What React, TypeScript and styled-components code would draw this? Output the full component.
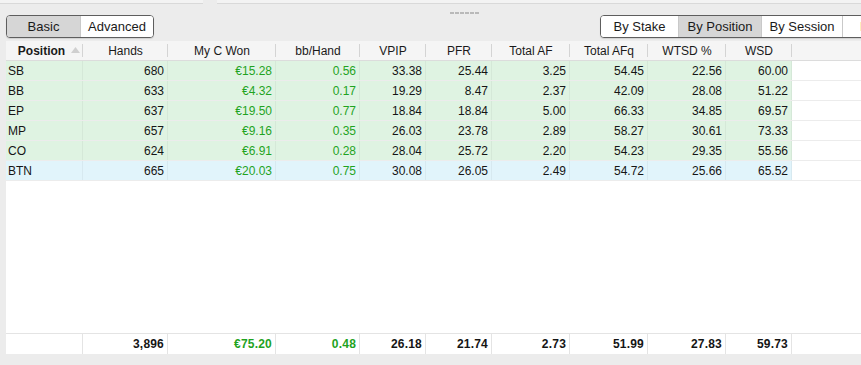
import React from "react";
import styled, { createGlobalStyle } from "styled-components";

const GlobalStyle = createGlobalStyle`
  html, body {
    margin: 0;
    padding: 0;
    background: #ececec;
  }
  body {
    font-family: "Liberation Sans", Arial, sans-serif;
    color: #1c1c1c;
  }
`;

const COLS = "77px 85px 108px 84px 66px 66px 78px 78px 78px 66px 1fr";

const Page = styled.div`
  width: 861px;
  height: 365px;
  display: flex;
  flex-direction: column;
  overflow: hidden;
  background: #ececec;
`;

const TopStrip = styled.div`
  height: 4px;
  display: flex;
  gap: 14px;
  flex-shrink: 0;
`;

const StripPiece = styled.div<{ $w?: number }>`
  ${({ $w }) => ($w ? `width: ${$w}px;` : "flex: 1;")}
  height: 3px;
  background: #f3f3f3;
  border-bottom: 1px solid #d9d9d9;
`;

const Toolbar = styled.div`
  position: relative;
  height: 37px;
  flex-shrink: 0;
  display: flex;
  align-items: flex-start;
  padding: 11px 0 0 6px;
  box-sizing: border-box;
  overflow: hidden;
`;

const Grip = styled.div`
  position: absolute;
  left: 450px;
  top: 8px;
  width: 30px;
  height: 2px;
  background: repeating-linear-gradient(
    to right,
    #b9b9b9 0 4px,
    transparent 4px 5px
  );
`;

const Segmented = styled.div<{ $offset?: number }>`
  display: flex;
  flex-shrink: 0;
  height: 23px;
  box-sizing: border-box;
  border: 1px solid #5e5e5e;
  border-radius: 4px;
  overflow: hidden;
  background: #ffffff;
  box-shadow: 0 1px 1px rgba(0, 0, 0, 0.12);
  margin-left: ${({ $offset }) => $offset ?? 0}px;
`;

const Segment = styled.div<{ $w: number; $active?: boolean; $tint?: string }>`
  width: ${({ $w }) => $w}px;
  flex-shrink: 0;
  display: flex;
  align-items: center;
  justify-content: center;
  font-size: 13px;
  color: ${({ $tint }) => $tint ?? "#1a1a1a"};
  background: ${({ $active }) => ($active ? "#d6d6d6" : "#ffffff")};
  border-right: 1px solid #c9c9c9;
  box-sizing: border-box;
  &:last-child {
    border-right: none;
  }
`;

const TablePanel = styled.div`
  flex: 1;
  margin-left: 6px;
  margin-bottom: 11px;
  background: #ffffff;
  display: flex;
  flex-direction: column;
  overflow: hidden;
`;

const HeaderRow = styled.div`
  display: grid;
  grid-template-columns: ${COLS};
  height: 19px;
  background: #f5f5f5;
  border-bottom: 1px solid #dcdcdc;
  flex-shrink: 0;
`;

const HeaderCell = styled.div<{ $bold?: boolean }>`
  position: relative;
  display: flex;
  align-items: center;
  justify-content: center;
  font-size: 12px;
  font-weight: ${({ $bold }) => ($bold ? 700 : 400)};
  color: #1a1a1a;
  &::after {
    content: "";
    position: absolute;
    right: 0;
    top: 3px;
    bottom: 3px;
    width: 1px;
    background: #d4d4d4;
  }
  &:last-child::after {
    display: none;
  }
`;

const SortArrow = styled.svg`
  position: absolute;
  right: 3px;
  top: 6px;
`;

const Body = styled.div`
  flex: 1;
  display: flex;
  flex-direction: column;
`;

const Row = styled.div<{ $bg: string }>`
  display: grid;
  grid-template-columns: ${COLS};
  height: 20px;
  box-sizing: border-box;
  border-bottom: 1px solid #ececec;
  background: linear-gradient(
    to right,
    ${({ $bg }) => $bg} 0 786px,
    #ffffff 786px
  );
`;

const Cell = styled.div<{ $left?: boolean; $green?: boolean; $bold?: boolean }>`
  display: flex;
  align-items: center;
  justify-content: ${({ $left }) => ($left ? "flex-start" : "flex-end")};
  padding: ${({ $left }) => ($left ? "0 0 0 2px" : "0 3px 0 0")};
  font-size: 12px;
  font-weight: ${({ $bold }) => ($bold ? 700 : 400)};
  color: ${({ $green }) => ($green ? "#1fa31f" : "#151515")};
  border-right: 1px solid rgba(0, 0, 0, 0.045);
  white-space: nowrap;
  &:last-child {
    border-right: none;
  }
`;

const Filler = styled.div`
  flex: 1;
`;

const FooterRow = styled.div`
  display: grid;
  grid-template-columns: ${COLS};
  height: 20px;
  border-top: 1px solid #e4e4e4;
  flex-shrink: 0;
`;

const FooterCell = styled(Cell)`
  border-right: 1px solid #e4e4e4;
  letter-spacing: 0.2px;
`;

type RowData = { pos: string; values: string[]; bg: string };

const GREEN = "#dff3e2";
const BLUE = "#e1f4fb";

const rows: RowData[] = [
  { pos: "SB", bg: GREEN, values: ["680", "€15.28", "0.56", "33.38", "25.44", "3.25", "54.45", "22.56", "60.00"] },
  { pos: "BB", bg: GREEN, values: ["633", "€4.32", "0.17", "19.29", "8.47", "2.37", "42.09", "28.08", "51.22"] },
  { pos: "EP", bg: GREEN, values: ["637", "€19.50", "0.77", "18.84", "18.84", "5.00", "66.33", "34.85", "69.57"] },
  { pos: "MP", bg: GREEN, values: ["657", "€9.16", "0.35", "26.03", "23.78", "2.89", "58.27", "30.61", "73.33"] },
  { pos: "CO", bg: GREEN, values: ["624", "€6.91", "0.28", "28.04", "25.72", "2.20", "54.23", "29.35", "55.56"] },
  { pos: "BTN", bg: BLUE, values: ["665", "€20.03", "0.75", "30.08", "26.05", "2.49", "54.72", "25.66", "65.52"] },
];

const totals = ["3,896", "€75.20", "0.48", "26.18", "21.74", "2.73", "51.99", "27.83", "59.73"];

const headers = ["Hands", "My C Won", "bb/Hand", "VPIP", "PFR", "Total AF", "Total AFq", "WTSD %", "WSD"];

const isGreen = (i: number) => i === 1 || i === 2;

export default function App() {
  return (
    <>
      <GlobalStyle />
      <Page>
        <TopStrip>
          <StripPiece $w={203} />
          <StripPiece />
        </TopStrip>
        <Toolbar>
          <Grip />
          <Segmented>
            <Segment $w={74} $active>
              Basic
            </Segment>
            <Segment $w={72}>Advanced</Segment>
          </Segmented>
          <Segmented $offset={446}>
            <Segment $w={78}>By Stake</Segment>
            <Segment $w={83} $active>
              By Position
            </Segment>
            <Segment $w={81}>By Session</Segment>
            <Segment $w={80} $tint="#8a4a12">
              By Date
            </Segment>
          </Segmented>
        </Toolbar>
        <TablePanel>
          <HeaderRow>
            <HeaderCell $bold>
              <span style={{ marginRight: 6 }}>Position</span>
              <SortArrow width="9" height="6" viewBox="0 0 9 6">
                <path d="M4.5 0 L9 6 L0 6 Z" fill="#cfcfcf" />
              </SortArrow>
            </HeaderCell>
            {headers.map((h) => (
              <HeaderCell key={h}>{h}</HeaderCell>
            ))}
            <HeaderCell />
          </HeaderRow>
          <Body>
            {rows.map((r) => (
              <Row key={r.pos} $bg={r.bg}>
                <Cell $left>{r.pos}</Cell>
                {r.values.map((v, i) => (
                  <Cell key={i} $green={isGreen(i)}>
                    {v}
                  </Cell>
                ))}
                <Cell />
              </Row>
            ))}
            <Filler />
          </Body>
          <FooterRow>
            <FooterCell $left />
            {totals.map((v, i) => (
              <FooterCell key={i} $bold $green={isGreen(i)}>
                {v}
              </FooterCell>
            ))}
            <Cell />
          </FooterRow>
        </TablePanel>
      </Page>
    </>
  );
}
